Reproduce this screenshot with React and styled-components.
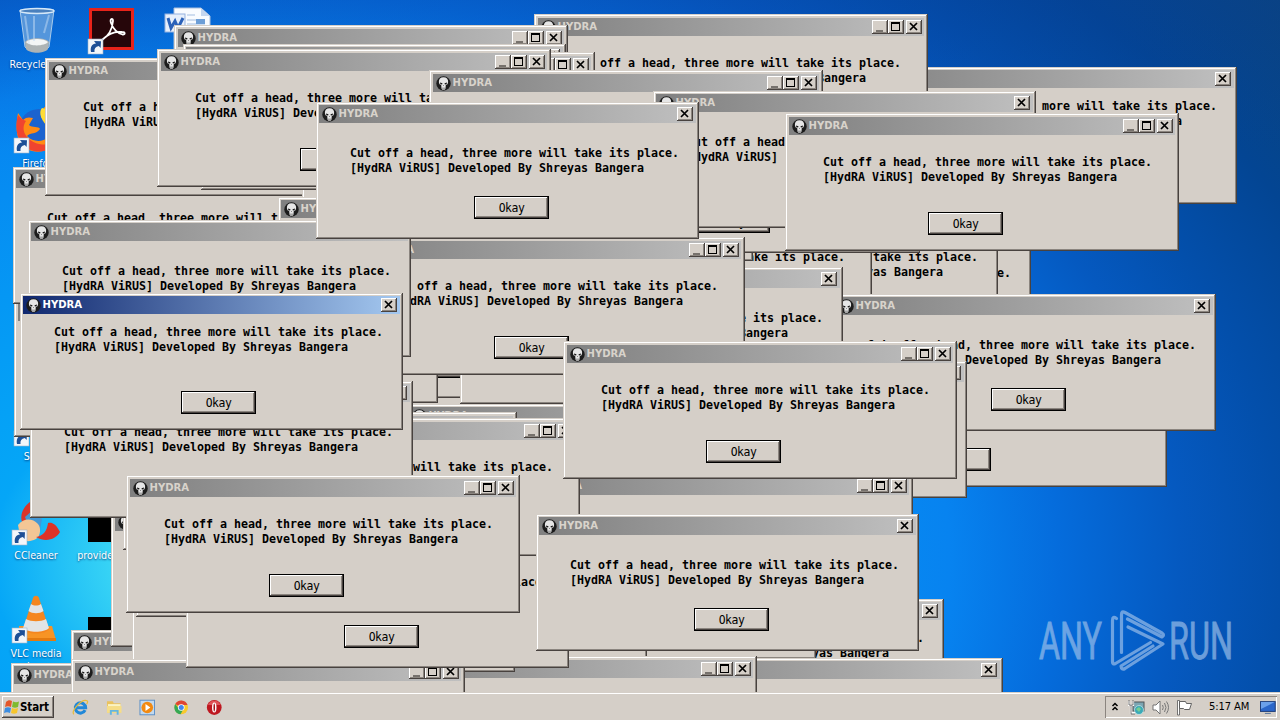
import React from "react";
import styled, { createGlobalStyle, css } from "styled-components";

const GlobalStyle = createGlobalStyle`
  html, body { margin: 0; padding: 0; overflow: hidden; background: #0556b8; }
  * { box-sizing: border-box; }
`;

const ui = `"DejaVu Sans Condensed", "DejaVu Sans", sans-serif`;
const mono = `"DejaVu Sans Mono", monospace`;

const Screen = styled.div`
  width: 1280px;
  height: 720px;
  display: flex;
  flex-direction: column;
  overflow: hidden;
  font-family: ${ui};
`;

const Desktop = styled.div`
  position: relative;
  flex: 1;
  overflow: hidden;
  background:
    linear-gradient(180deg, rgba(8, 60, 160, 0.25) 0%, transparent 22%),
    radial-gradient(ellipse 1000px 700px at 250px 560px,
      #5ce4fa 0%, #37d3f5 14%, #05a6f7 26%, #0597f4 45%, #0783f0 70%,
      #056cdc 81%, #0559c0 93%, #034fab 103%, #034593 115%, #0b4479 132%);
`;

const Shortcut = styled.div`
  position: absolute;
  left: ${(p) => p.$x}px;
  top: ${(p) => p.$y}px;
  width: 76px;
  display: flex;
  flex-direction: column;
  align-items: center;
  gap: ${(p) => p.$gap ?? 4}px;
  color: #fff;
  font-size: 10.6px;
  line-height: 13px;
  text-align: center;
  text-shadow: 0 1px 2px rgba(0, 20, 80, 0.7);
  white-space: nowrap;
`;

const Art = styled.svg`
  display: block;
  width: 48px;
  height: 48px;
  overflow: visible;
`;

/* ---------- window chrome ---------- */

const Frame = styled.section`
  position: absolute;
  left: ${(p) => p.$x}px;
  top: ${(p) => p.$y}px;
  width: ${(p) => (p.$sizable ? 394 : 383)}px;
  height: ${(p) => (p.$sizable ? 138 : 137)}px;
  padding: ${(p) => (p.$sizable ? 4 : 3)}px;
  display: flex;
  flex-direction: column;
  background: #d5cfc8;
  box-shadow:
    inset -1px -1px 0 #48423f,
    inset 1px 1px 0 #d5cfc8,
    inset -2px -2px 0 #8b857f,
    inset 2px 2px 0 #fff;
`;

const TitleBar = styled.header`
  flex: none;
  height: 18px;
  padding: 0 ${(p) => (p.$sizable ? 2 : 3)}px 0 3px;
  display: flex;
  align-items: center;
  background: ${(p) =>
    p.$active
      ? "linear-gradient(90deg, #10286f, #a4c8f0)"
      : "linear-gradient(90deg, #808080, #c0c0c0)"};
  color: ${(p) => (p.$active ? "#fff" : "#d8d3cb")};
`;

const Caption = styled.span`
  flex: 1;
  margin-left: 1.5px;
  font: bold 11.200px/18px ${ui};
`;

const Skull = styled.svg`
  width: 15px;
  height: 15px;
`;

const raised = css`
  background: #d5cfc8;
  box-shadow:
    inset -1px -1px 0 #48423f,
    inset 1px 1px 0 #fff,
    inset -2px -2px 0 #8b857f;
`;

const CaptionButton = styled.span`
  width: 16px;
  height: 14px;
  margin-left: ${(p) => p.$gap || 0}px;
  ${raised}
  svg { display: block; width: 16px; height: 14px; }
`;

const Body = styled.div`
  display: flex;
  flex-direction: column;
  align-items: flex-start;
  padding-top: ${(p) => p.$top}px;
`;

const Message = styled.p`
  margin: 0 0 0 ${(p) => p.$indent}px;
  font: bold 11.63px/15px ${mono};
  color: #000;
  white-space: pre;
`;

const OkButton = styled.button`
  width: 75px;
  height: 23px;
  margin: ${(p) => p.$gap}px 0 0 ${(p) => p.$indent}px;
  padding: 0;
  border: 1px solid #000;
  font: 11.4px/20px ${mono};
  letter-spacing: -0.45px;
  color: #000;
  ${raised}
`;

function SkullIcon() {
  return (
    <Skull viewBox="0 0 15 15">
      <circle cx="7.5" cy="7.5" r="7.2" fill="#1c1c1c" />
      <path d="M7.500 1.200C4.300 1.200 2.800 3.200 2.900 5.600c0 1.300.3 2.100.9 2.800l1.400.6.3 3.400.8 1.600h2.400l.8-1.600.3-3.400 1.400-.6c.6-.7.9-1.500.9-2.800C12.200 3.200 10.700 1.200 7.500 1.200z" fill="#e6e6e6" />
      <path d="M4 6.400l2.500.9-.4 1.200-1.700-.3zM11 6.400l-2.500.9.4 1.200 1.700-.3z" fill="#161616" />
      <path d="M7.500 8.900l.5 1.100H7z" fill="#333" />
      <path d="M6.500 11.500V14M7.500 11.500V14M8.500 11.500V14" stroke="#444" strokeWidth=".4" />
    </Skull>
  );
}

function MinimizeButton() {
  return (
    <CaptionButton>
      <svg viewBox="0 0 16 14"><path d="M4 11h7" stroke="#77726d" strokeWidth="2" /></svg>
    </CaptionButton>
  );
}

function MaximizeButton() {
  return (
    <CaptionButton>
      <svg viewBox="0 0 16 14">
        <rect x="3.500" y="2.500" width="8" height="8" fill="none" stroke="#000" />
        <path d="M3 3h9" stroke="#000" strokeWidth="2" />
      </svg>
    </CaptionButton>
  );
}

function CloseButton({ gap }) {
  return (
    <CaptionButton $gap={gap}>
      <svg viewBox="0 0 16 14"><path d="M4 3l7 7M11 3l-7 7" stroke="#000" strokeWidth="1.700" /></svg>
    </CaptionButton>
  );
}

const layouts = {
  sizable: { top: 20, indent: 34, gap: 27, button: 139 },
  fixed: { top: 23, indent: 31, gap: 20, button: 155 },
  compact: { top: 11, indent: 31, gap: 36, button: 158 },
};

function HydraWindow({ x, y, kind, active }) {
  const sizable = kind === "sizable";
  const l = layouts[kind];
  return (
    <Frame $x={x} $y={y} $sizable={sizable}>
      <TitleBar $active={active} $sizable={sizable}>
        <SkullIcon />
        <Caption>HYDRA</Caption>
        {sizable && <MinimizeButton />}
        {sizable && <MaximizeButton />}
        <CloseButton gap={2} />
      </TitleBar>
      <Body $top={l.top}>
        <Message $indent={l.indent}>
          {"Cut off a head, three more will take its place.\n[HydRA ViRUS] Developed By Shreyas Bangera"}
        </Message>
        <OkButton $gap={l.gap} $indent={l.button}>Okay</OkButton>
      </Body>
    </Frame>
  );
}

const S = "sizable";
const F = "fixed";
const C = "compact";

/* back to front */
const windows = [
  [648, 222, F], [615, 206, F], [854, 67, C], [773, 349, S],
  [14, 299, S], [312, 300, F], [478, 208, S], [359, 123, S],
  [537, 116, F], [833, 294, F], [260, 261, F],
  [561, 599, C], [433, 522, F], [264, 540, F], [620, 658, F], [363, 656, S],
  [11, 663, F], [71, 630, F], [111, 509, S], [132, 535, F],
  [136, 480, F], [71, 659, S],
  [460, 267, F], [55, 266, F],
  [13, 167, F], [45, 58, S], [302, 80, F], [278, 197, F],
  [534, 14, S], [174, 25, S], [183, 44, F], [201, 52, S], [157, 49, S],
  [429, 70, S], [653, 91, F], [785, 113, S],
  [351, 237, S], [28, 220, F],
  [406, 404, F], [123, 412, S], [584, 361, F], [519, 473, S],
  [186, 531, F], [186, 418, S], [30, 381, F],
  [563, 341, S], [126, 475, S], [536, 514, F], [316, 102, F],
  [20, 293, C, true],
];

/* ---------- desktop artwork ---------- */

function ShortcutArrow() {
  return (
    <g>
      <rect x="0" y="33" width="15" height="15" fill="#f2f6fa" stroke="#9db3c8" strokeWidth=".6" />
      <path d="M3 46c-1-5 1-8 5-8.500l-2-2.500 7 .2-.4 6.800-1.800-2C7.500 40.500 6 42.500 6.500 46z" fill="#1d4f96" />
    </g>
  );
}

function DesktopIcons() {
  return (
    <>
      <Shortcut $x={-1} $y={6}>
        <Art viewBox="0 0 48 48">
          <path d="M7 4l5 37c5 6 19 6 24 0l5-37z" fill="#6fa6dd" fillOpacity=".75" stroke="#a9cbea" />
          <path d="M12 36c4-5 20-5 24 0l-1 7c-4 5-18 5-22 0z" fill="#aeb4b5" />
          <path d="M13 36c4-4 18-4 22 0-3 4-18 5-22 0z" fill="#f4f6f6" />
          <ellipse cx="24" cy="5" rx="17" ry="2.500" fill="#4a80bd" stroke="#d5e8f8" strokeWidth="1.300" />
          <path d="M12 10l4 28M36 9l-5 18M21 10v25" stroke="#c3dcf3" strokeOpacity=".5" strokeWidth="2" fill="none" />
        </Art>
        <span>Recycle Bin</span>
      </Shortcut>

      <Shortcut $x={74} $y={6}>
        <Art viewBox="0 0 48 48">
          <rect x="2.500" y="3.500" width="42" height="39" fill="#26060a" stroke="#e8231a" strokeWidth="3" />
          <path d="M14 34c8-5 10.500-13 11-19 0-3.500-3.500-2.500-2 2 2.500 6.500 6 10 11.500 11.500 3 .5 3-2.500-.5-2.500-7-1-13 1-20 8z" fill="none" stroke="#fff" strokeWidth="1.800" />
          <ShortcutArrow />
        </Art>
      </Shortcut>

      <Shortcut $x={149} $y={6}>
        <Art viewBox="0 0 48 48">
          <path d="M11 2h27l9 8v38H11z" fill="#f8fbff" stroke="#a9bfdd" />
          <path d="M38 2v8h9z" fill="#c4d6ef" />
          <path d="M24 9h8M24 14h18M24 18h18M24 23h18" stroke="#a3bde0" />
          <rect x="33" y="13" width="9" height="5" fill="#6d9ed6" />
          <rect x="2" y="8" width="20" height="18" fill="#e7effb" stroke="#95b2df" />
          <path d="M5 12l3 10 4-7 3 7 5-10" fill="none" stroke="#2b61b8" strokeWidth="3" />
        </Art>
      </Shortcut>

      <Shortcut $x={0} $y={105}>
        <Art viewBox="0 0 48 48">
          <circle cx="25" cy="24" r="20" fill="#1b63cf" />
          <path d="M30 2c12 2 18 12 17 24-2 16-16 23-29 20C5 43 0 30 4 8l5 7c3-3 6-3 10-2l-4 7c3 3 10 1 11 4-4 6-9 3-13 7 8 9 25 5 26-7 0-9-10-11-9-22z" fill="#ff8b14" />
          <path d="M4 10c-5 17 2 33 16 36 10 2 19-2 24-9-12 5-27 3-33-8-2-4-2-9 1-13-3-1-6-3-8-6z" fill="#f0442f" />
          <path d="M28 3c-4 4-1 14 8 20l9 3c1-12-4-21-17-23z" fill="#ffdc35" />
          <ShortcutArrow />
        </Art>
        <span>Firefox</span>
      </Shortcut>

      <Shortcut $x={0} $y={398}>
        <Art viewBox="0 0 48 48">
          <circle cx="26" cy="22" r="17" fill="#10aee9" />
          <ShortcutArrow />
        </Art>
        <span>Skype</span>
      </Shortcut>

      <Shortcut $x={-2} $y={497}>
        <Art viewBox="0 0 48 48">
          <path d="M10 25C7 16 14 5 23 3l11 3-14 17z" fill="#d9352b" />
          <path d="M13 20l8-7 9 9-2 11-12-5z" fill="#4298d6" />
          <path d="M6 28c6-7 14-7 20-1 3 3 3 12-2 15-8 4-13 2-16-3z" fill="#f3c695" />
          <path d="M24 40c7-1 11-6 12-14 4-1 8 1 12 9-4 7-14 11-24 5z" fill="#dc3327" />
          <ShortcutArrow />
        </Art>
        <span>CCleaner</span>
      </Shortcut>

      <Shortcut $x={-2} $y={595}>
        <Art viewBox="0 0 48 48">
          <path d="M7 31h33l4 14H8z" fill="#f79425" />
          <path d="M8 43h36v3H8z" fill="#e37a10" />
          <path d="M21 3c1-3 5-3 6 0l10 31c-3 6-23 6-26 0z" fill="#f5861f" />
          <path d="M19 9c3 2 7 2 10 0l2.500 7c-4 3-11 3-15 0zM14 24c5 3 15 3 20 0l3 9c-5 5-21 5-26 0z" fill="#e2e4e6" />
          <ShortcutArrow />
        </Art>
        <span>VLC media<br />player</span>
      </Shortcut>

      <Shortcut $x={68} $y={497}>
        <Art viewBox="0 0 48 48"><rect x="6" y="17" width="46" height="28" fill="#000" /></Art>
        <span>providepri...</span>
      </Shortcut>

      <Shortcut $x={73} $y={595}>
        <Art viewBox="0 0 48 48"><rect x="1" y="22" width="46" height="24" fill="#000" /></Art>
      </Shortcut>
    </>
  );
}

const Watermark = styled.svg`
  position: absolute;
  left: 1030px;
  top: 600px;
  width: 210px;
  height: 80px;
  opacity: 0.68;
`;

function AnyRun() {
  return (
    <Watermark viewBox="1030 600 210 80">
      <g fill="#9dc0ea" stroke="#9dc0ea" strokeWidth=".9" fontFamily="Roboto, sans-serif" fontSize="51">
        <text x="1039" y="659" textLength="63" lengthAdjust="spacingAndGlyphs">ANY</text>
        <text x="1169" y="659" textLength="64" lengthAdjust="spacingAndGlyphs">RUN</text>
      </g>
      <g fill="none" stroke="#9dc0ea" strokeWidth="3.200" strokeLinejoin="round" strokeLinecap="round">
        <path d="M1116.500 618.500q-4-3-4 2v41.500q0 3 3 1.500l35-21" />
        <path d="M1121.500 652.500v-38q0-4 3.500-2l37 20.500q3 2 0 4l-34.500-18" />
        <path d="M1128 627l35 17-38 24.500q-3.500 2-4-2.500l32-20" />
      </g>
    </Watermark>
  );
}

/* ---------- taskbar ---------- */

const Taskbar = styled.footer`
  flex: none;
  height: 28px;
  display: flex;
  align-items: center;
  padding: 3px 3px 1px 2px;
  background: #d5cfc8;
  box-shadow: inset 0 1px 0 #d5cfc8, inset 0 2px 0 #fff;
`;

const StartButton = styled.button`
  width: 52px;
  height: 22px;
  padding: 0 0 0 2px;
  border: 0;
  display: flex;
  align-items: center;
  gap: 0;
  font: bold 11.500px/20px ${ui};
  letter-spacing: -0.1px;
  color: #000;
  ${raised}
`;

const QuickLaunch = styled.div`
  display: flex;
  gap: 17px;
  margin-left: 18px;
  flex: 1;
  svg { width: 16.500px; height: 17px; display: block; }
`;

const Tray = styled.div`
  width: 172px;
  height: 22px;
  display: flex;
  align-items: center;
  padding: 0 1px 0 5px;
  box-shadow: inset 1px 1px 0 #8b857f, inset -1px -1px 0 #fff;
`;

const Clock = styled.span`
  width: 42px;
  margin: 0 10px 0 10px;
  font: 11.100px/20px ${ui};
  letter-spacing: -0.1px;
  color: #000;
  white-space: nowrap;
`;

const TrayGlyph = styled.svg`
  width: ${(p) => p.$w}px;
  height: 17px;
  margin-right: ${(p) => p.$gap}px;
  flex: none;
`;

function TaskbarView() {
  return (
    <Taskbar>
      <StartButton>
        <svg width="16" height="16" viewBox="0 0 16 16">
          <path d="M2 3c2-2 4-2 6-1L7 8C5 7 3 7 1 8z" fill="#e4572a" />
          <path d="M9 2.500c2 1 4 1 6 0L14 8c-2 1-4 1-6 0z" fill="#7fba2f" />
          <path d="M1 9c2-1 4-1 6 0l-1 5c-2-1-4-1-6 0z" fill="#3d8de0" />
          <path d="M8 9c2 1 4 1 6 0l-1 5c-2 1-4 1-6 0z" fill="#f7c52c" />
        </svg>
        Start
      </StartButton>
      <QuickLaunch>
        <svg viewBox="0 0 17 17">
          <path d="M13.500 11.200A5.300 5.300 0 1 1 14 8.700H4.500" fill="none" stroke="#2188d8" strokeWidth="3.200" />
          <path d="M1.800 15.500C-1 12 10-1 15.500 1.600c1 .6.600 2-.4 3.400" fill="none" stroke="#e6bb3c" strokeWidth="1.300" />
        </svg>
        <svg viewBox="0 0 17 17">
          <path d="M1 2h6l1 2h7v10H1z" fill="#eac25d" />
          <path d="M2 5h13v4H2z" fill="#fbf3c4" />
          <path d="M1 7h15v7H1z" fill="#f6dd87" />
          <path d="M4 16v-5h9v5h-2v-3H6v3z" fill="#64b5e0" />
        </svg>
        <svg viewBox="0 0 17 17">
          <rect x="1" y="1" width="15" height="15" fill="#c2d9ee" stroke="#5b90c8" />
          <circle cx="8.500" cy="8.500" r="6" fill="#f28a12" />
          <path d="M6.700 5v7l5-3.500z" fill="#fff" />
        </svg>
        <svg viewBox="0 0 17 17">
          <circle cx="8.500" cy="8.500" r="7" fill="#f8c92d" />
          <path d="M8.500 8.500L2.300 5A7 7 0 0 1 15 6H8.500z" fill="#df4534" />
          <path d="M2.300 5a7 7 0 0 0 5.500 10.500L11 9.500 5.500 9z" fill="#36a854" />
          <circle cx="8.500" cy="8.500" r="3.400" fill="#fff" />
          <circle cx="8.500" cy="8.500" r="2.600" fill="#4386ee" />
        </svg>
        <svg viewBox="0 0 17 17">
          <circle cx="8.500" cy="8.500" r="7.600" fill="#be1820" />
          <path d="M2 6a7 7 0 0 1 13 0z" fill="#df5257" />
          <ellipse cx="8.500" cy="8.500" rx="2.300" ry="5.200" fill="#fff" />
          <ellipse cx="8.500" cy="8.500" rx=".8" ry="4" fill="#a3131a" />
        </svg>
      </QuickLaunch>
      <Tray>
        <TrayGlyph $w={10} $gap={8} viewBox="0 0 10 17">
          <path d="M2.500 7L5 4.500 7.500 7M2.500 11L5 8.500l2.500 2.500" fill="none" stroke="#000" strokeWidth="1.500" />
        </TrayGlyph>
        <TrayGlyph $w={17} $gap={7} viewBox="0 0 17 17">
          <rect x="5" y="3" width="11" height="9" fill="#7ba5b2" stroke="#4f5557" />
          <path d="M1 2v4h4V2M3 6v8h4" fill="none" stroke="#fff" strokeWidth="2.200" />
          <path d="M1 1v5h4V1M3 6v9h4" fill="none" stroke="#555" strokeWidth=".8" />
          <circle cx="11" cy="11" r="4.500" fill="#3ba9b7" stroke="#e1f1f0" strokeWidth=".6" />
          <path d="M8 10l3-2 2 2-2 3z" fill="#75cf91" />
        </TrayGlyph>
        <TrayGlyph $w={17} $gap={7} viewBox="0 0 17 17">
          <path d="M1 6h3l4-4v13l-4-4H1z" fill="#fff" stroke="#666" strokeWidth=".9" />
          <path d="M10.500 6q1.500 2.500 0 5M12.500 4q3 4.500 0 9M14.500 2.500q4 6 0 12" fill="none" stroke="#777" />
        </TrayGlyph>
        <TrayGlyph $w={17} $gap={6} viewBox="0 0 17 17">
          <path d="M1.500 1.500h2V16h-2z" fill="#fff" stroke="#555" strokeWidth=".8" />
          <path d="M3.500 2.500h6l1 2h5l-2 6h-5l-1-1h-4z" fill="#fff" stroke="#555" strokeWidth=".9" />
        </TrayGlyph>
        <Clock>5:17 AM</Clock>
        <svg width="16" height="15" viewBox="0 0 16 15">
          <rect x=".5" y="1.500" width="15" height="10" fill="#2b66c9" stroke="#203e79" />
          <path d="M1 2h14L1 9z" fill="#6ba0ea" />
          <path d="M5 13.500h6" stroke="#54719b" />
        </svg>
      </Tray>
    </Taskbar>
  );
}

export default function App() {
  return (
    <Screen>
      <GlobalStyle />
      <Desktop>
        <DesktopIcons />
        {windows.map(([x, y, kind, active], i) => (
          <HydraWindow key={i} x={x} y={y} kind={kind} active={active} />
        ))}
        <AnyRun />
      </Desktop>
      <TaskbarView />
    </Screen>
  );
}
